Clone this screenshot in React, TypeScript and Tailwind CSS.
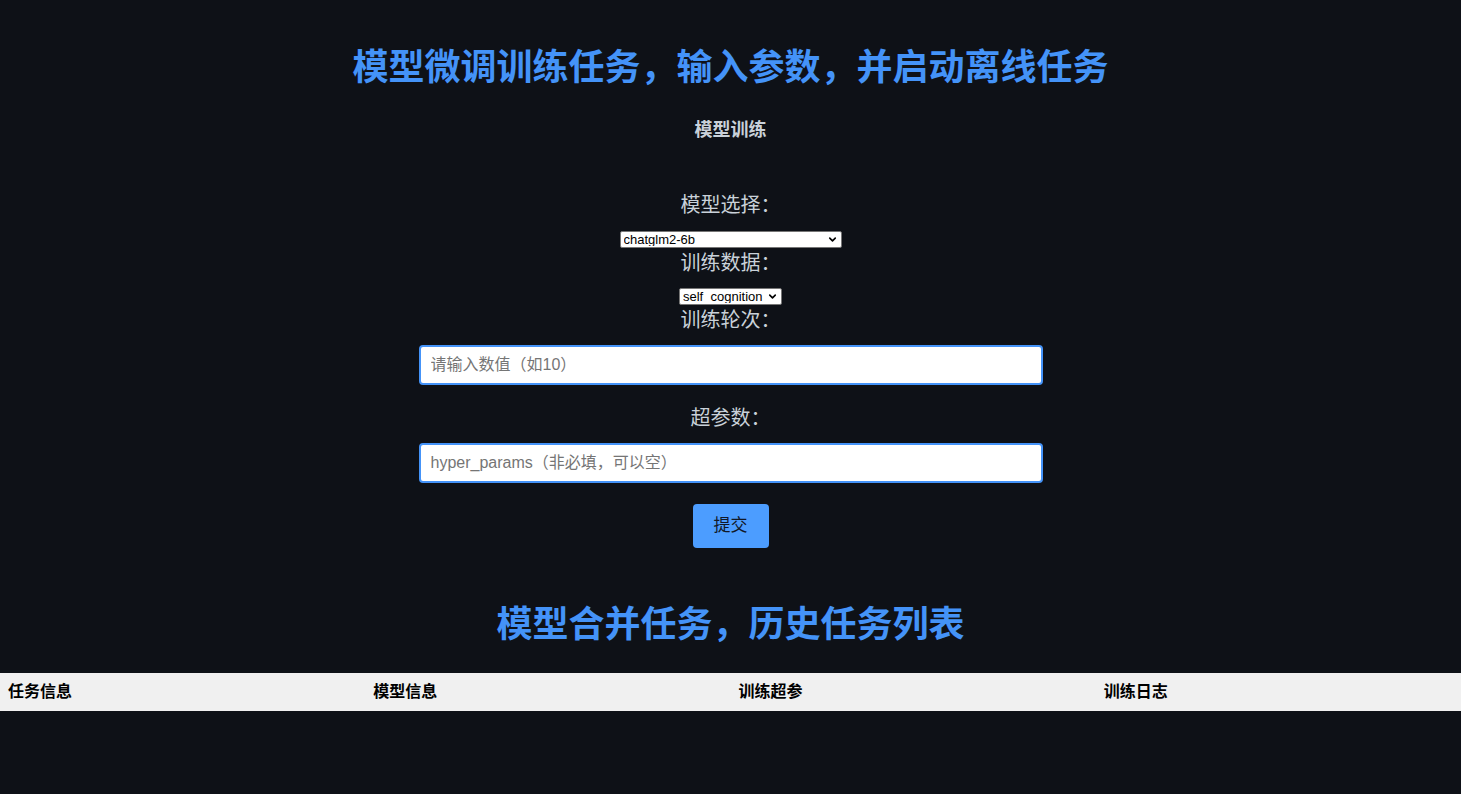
import { ChevronDown } from "lucide-react";

const font = { fontFamily: '"Liberation Sans", "Noto Sans CJK SC", sans-serif' };

function Select({ value, width }: { value: string; width: string }) {
  return (
    <div className={`mx-auto flex h-[17px] items-center bg-white border border-[#767676] rounded-[2px] ${width}`}>
      <select
        defaultValue={value}
        className="h-full flex-1 appearance-none bg-transparent pl-[3px] text-[13px] leading-none text-black outline-none"
      >
        <option>{value}</option>
      </select>
      <ChevronDown size={11} strokeWidth={3.5} className="mr-[3px] text-black pointer-events-none" />
    </div>
  );
}

function Label({ text, className }: { text: string; className?: string }) {
  return (
    <div className={`text-[20px] leading-[22px] text-[#c9d1d9] ${className ?? ""}`}>{text}</div>
  );
}

export default function App() {
  const cols = ["任务信息", "模型信息", "训练超参", "训练日志"];
  return (
    <div className="min-h-screen bg-[#0e1117] pt-[46px] text-center" style={font}>
      <h1 className="text-[36px] leading-[44px] font-bold text-[#4493f8]">
        模型微调训练任务，输入参数，并启动离线任务
      </h1>
      <h2 className="mt-[29px] text-[18px] leading-[22px] font-bold text-[#c9d1d9]">模型训练</h2>

      <form className="mt-[53px] flex flex-col items-center">
        <Label text="模型选择：" />
        <div className="mt-[15px] w-full">
          <Select value="chatglm2-6b" width="w-[222px]" />
        </div>
        <Label text="训练数据：" className="mt-[4px]" />
        <div className="mt-[14px] w-full">
          <Select value="self_cognition" width="w-[103px]" />
        </div>
        <Label text="训练轮次：" className="mt-[4px]" />
        <input
          placeholder="请输入数值（如10）"
          className="mt-[14px] h-[40px] w-[624px] rounded-[4px] border-2 border-[#4493f8] bg-white px-[10px] text-[16px] text-black placeholder:text-[#757575] outline-none"
        />
        <Label text="超参数：" className="mt-[22px]" />
        <input
          placeholder="hyper_params（非必填，可以空）"
          className="mt-[14px] h-[40px] w-[624px] rounded-[4px] border-2 border-[#4493f8] bg-white px-[10px] text-[16px] text-black placeholder:text-[#757575] outline-none"
        />
        <button
          type="button"
          className="mt-[21px] h-[44px] w-[76px] rounded-[4px] bg-[#4c9dff] text-[17px] text-[#111827]"
        >
          提交
        </button>
      </form>

      <h1 className="mt-[55px] text-[36px] leading-[44px] font-bold text-[#4493f8]">
        模型合并任务，历史任务列表
      </h1>

      <table className="mt-[26px] w-full table-fixed border-collapse">
        <thead>
          <tr className="bg-[#f0f0f0]">
            {cols.map((c) => (
              <th key={c} className="h-[38px] px-[8px] text-left text-[16px] font-bold text-black">
                {c}
              </th>
            ))}
          </tr>
        </thead>
      </table>
    </div>
  );
}
